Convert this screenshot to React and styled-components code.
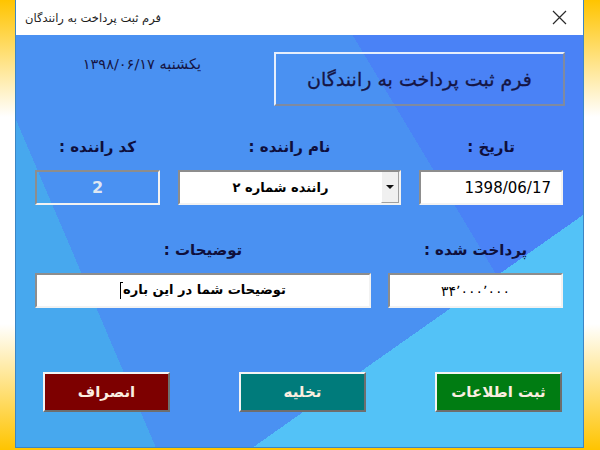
import styled, { createGlobalStyle } from "styled-components";

const GlobalStyle = createGlobalStyle`
    html, body {
        margin: 0;
        padding: 0;
    }

    body {
        width: 600px;
        height: 450px;
        overflow: hidden;
        font-family: "DejaVu Sans", "Noto Sans", sans-serif;
        background: linear-gradient(
            to bottom,
            #ffc400 0%,
            #fff 26%,
            #fff 72%,
            #ffc400 100%
        );
    }
`;

const Page = styled.div`
    box-sizing: border-box;
    width: 600px;
    height: 450px;
    padding: 0 16px 0 15px;
`;

const Window = styled.div`
    box-sizing: border-box;
    height: 448px;
    display: flex;
    flex-direction: column;
    border: 1px solid #3d86c4;
    border-top: none;
`;

const TitleBar = styled.div`
    height: 35px;
    flex: none;
    display: flex;
    align-items: center;
    justify-content: space-between;
    padding: 0 16px 0 9px;
    background: #fff;
    direction: ltr;
`;

const TitleText = styled.span`
    font-size: 11.5px;
    color: #1e1e1e;
    direction: rtl;
`;

const CloseIcon = () => (
    <svg width="15" height="15" viewBox="0 0 15 15">
        <path d="M1 1 L14 14 M14 1 L1 14" stroke="#2a2a2a" strokeWidth="1.2" />
    </svg>
);

const Body = styled.div`
    flex: 1;
    display: flex;
    flex-direction: column;
    padding: 17px 20px 0 19px;
    direction: rtl;
    background:
        linear-gradient(144.86deg, transparent 71.4%, #53c2f7 71.4%),
        linear-gradient(246.89deg, transparent 81.2%, #47a8ee 81.2%),
        linear-gradient(59.04deg, transparent 71.7%, #4a82f6 71.7%),
        #4a91f2;
`;

const Header = styled.div`
    display: flex;
    align-items: flex-start;
    gap: 73px;
`;

const TitleBox = styled.div`
    box-sizing: border-box;
    width: 291px;
    height: 54px;
    margin-right: -2px;
    display: flex;
    align-items: center;
    justify-content: center;
    border: 2px solid;
    border-color: #e6eefc #7f8aa0 #7f8aa0 #e6eefc;
    font-size: 19px;
    color: #151545;
    -webkit-text-stroke: 0.3px #151545;
`;

const DateText = styled.div`
    margin-top: 4px;
    font-size: 14.5px;
    color: #151545;
`;

const FieldRow = styled.div`
    display: grid;
    grid-template-columns: ${({ $cols }) => $cols};
    justify-content: space-between;
    margin-top: ${({ $top }) => $top}px;
`;

const Group = styled.div`
    display: flex;
    flex-direction: column;
    gap: 13px;
`;

const Label = styled.div`
    height: 20px;
    line-height: 20px;
    text-align: center;
    font-size: 15px;
    font-weight: bold;
    color: #0f0f3c;
`;

const Field = styled.div`
    box-sizing: border-box;
    height: 35px;
    display: flex;
    align-items: center;
    justify-content: ${({ $align }) => $align || "center"};
    padding: 0 10px;
    border: 2px solid;
    border-color: #8d8d8d #f2f2f2 #f2f2f2 #8d8d8d;
    background: ${({ $bg }) => $bg || "#fff"};
    color: ${({ $color }) => $color || "#000"};
    font-size: ${({ $size }) => $size || 13}px;
    font-weight: ${({ $bold }) => ($bold ? "bold" : "normal")};
`;

const ComboField = styled(Field)`
    padding: 0;
    justify-content: flex-start;
`;

const ComboText = styled.span`
    flex: 1;
    text-align: center;
`;

const DropButton = styled.span`
    box-sizing: border-box;
    width: 18px;
    align-self: stretch;
    display: flex;
    align-items: center;
    justify-content: center;
    background: #f0f0f0;
    border-left: 1px solid #fff;
    border-right: 1px solid #a0a0a0;
    border-bottom: 1px solid #a0a0a0;

    &::after {
        content: "";
        border-left: 4px solid transparent;
        border-right: 4px solid transparent;
        border-top: 4px solid #111;
    }
`;

const LtrText = styled.span`
    direction: ltr;
    unicode-bidi: isolate;
    letter-spacing: ${({ $spacing }) => $spacing || 0}px;
`;

const Caret = styled.span`
    display: inline-block;
    width: 1px;
    height: 17px;
    margin-right: 2px;
    background: #000;
    vertical-align: middle;
    position: relative;

    &::before {
        content: "";
        position: absolute;
        top: 0;
        left: 0;
        width: 3px;
        height: 1px;
        background: #000;
    }
`;

const ButtonRow = styled.div`
    display: flex;
    gap: 69px;
    margin-top: 64px;
    padding-right: 1px;
`;

const Button = styled.button`
    box-sizing: border-box;
    width: 127px;
    height: 40px;
    padding: 0;
    border: 2px solid;
    border-color: #f4f4f4 #6e6e6e #6e6e6e #f4f4f4;
    background: ${({ $bg }) => $bg};
    color: #fbeee0;
    font-family: "DejaVu Sans", sans-serif;
    font-size: 15px;
    font-weight: bold;
    direction: rtl;
    cursor: pointer;
`;

export default function App() {
    return (
        <>
            <GlobalStyle />
            <Page>
                <Window>
                    <TitleBar>
                        <TitleText>فرم ثبت پرداخت به رانندگان</TitleText>
                        <CloseIcon />
                    </TitleBar>

                    <Body>
                        <Header>
                            <TitleBox>فرم ثبت پرداخت به رانندگان</TitleBox>
                            <DateText>یکشنبه ۱۳۹۸/۰۶/۱۷</DateText>
                        </Header>

                        <FieldRow $cols="144px 223px 125px" $top={31}>
                            <Group>
                                <Label>تاریخ :</Label>
                                <Field $align="flex-start" $size={15}>
                                    <LtrText>1398/06/17</LtrText>
                                </Field>
                            </Group>
                            <Group>
                                <Label>نام راننده :</Label>
                                <ComboField $bold>
                                    <DropButton />
                                    <ComboText>راننده شماره ۲</ComboText>
                                </ComboField>
                            </Group>
                            <Group>
                                <Label>کد راننده :</Label>
                                <Field $bg="transparent" $color="#dfe7f2" $size={16} $bold>
                                    2
                                </Field>
                            </Group>
                        </FieldRow>

                        <FieldRow $cols="175px 336px" $top={35}>
                            <Group>
                                <Label>پرداخت شده :</Label>
                                <Field $size={14}>
                                    <LtrText $spacing={1}>۳۴٬۰۰۰٬۰۰۰</LtrText>
                                </Field>
                            </Group>
                            <Group>
                                <Label>توضیحات :</Label>
                                <Field $bold>
                                    <span>
                                        توضیحات شما در این باره
                                        <Caret />
                                    </span>
                                </Field>
                            </Group>
                        </FieldRow>

                        <ButtonRow>
                            <Button $bg="#007c12">ثبت اطلاعات</Button>
                            <Button $bg="#007b7b">تخلیه</Button>
                            <Button $bg="#7d0000">انصراف</Button>
                        </ButtonRow>
                    </Body>
                </Window>
            </Page>
        </>
    );
}
